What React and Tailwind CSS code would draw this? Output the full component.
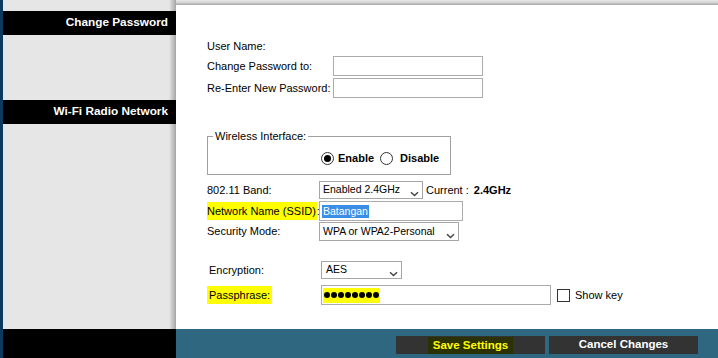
const font = { fontFamily: '"Liberation Sans", Arial, sans-serif' };

function Chevron() {
  return (
    <svg width="9" height="6" viewBox="0 0 9 6" className="shrink-0">
      <path d="M1 1.2 L4.5 4.6 L8 1.2" fill="none" stroke="#444" strokeWidth="1.4" />
    </svg>
  );
}

function Select({ value, className }) {
  return (
    <div className={`flex justify-between border border-[#a6a6a6] bg-white pl-[3px] pr-[3px] ${className}`}>
      <span className="whitespace-nowrap text-[10.5px] leading-[15px] text-black">{value}</span>
      <div className="flex items-end pb-[1px]">
        <Chevron />
      </div>
    </div>
  );
}

function Radio({ checked }) {
  return (
    <span className="flex h-[13px] w-[13px] items-center justify-center rounded-full border border-[#333] bg-white">
      {checked && <span className="h-[7px] w-[7px] rounded-full bg-black" />}
    </span>
  );
}

function SideBar({ children, className = "" }) {
  return (
    <div className={`flex h-[24px] items-center justify-end whitespace-nowrap bg-black pr-[8px] text-[11.8px] font-bold text-white ${className}`}>
      {children}
    </div>
  );
}

export default function App() {
  return (
    <div className="flex h-[358px] w-[718px] overflow-hidden bg-white text-[11px] text-black" style={font}>
      <div className="w-[3px] shrink-0 bg-[#0c3a5e]" />
      <div className="flex flex-1 flex-col">
        <div className="flex h-[329px]">
          {/* sidebar */}
          <div className="w-[173px] shrink-0 bg-[linear-gradient(to_right,#e6e6e6_166px,#d2d2d2_168px,#b8b8b8_171px,#a4a4a4_173px)] pt-[11px]">
            <SideBar>Change Password</SideBar>
            <SideBar className="mt-[65px]">Wi-Fi Radio Network</SideBar>
          </div>

          {/* main */}
          <div className="flex flex-1 flex-col">
            <div className="h-[5px] bg-[linear-gradient(to_bottom,#e8e8e8,#d4d4d4_50%,#a6a6a6)]" />
            <div className="flex-1 whitespace-nowrap bg-white pl-[31px] pt-[31px]">
              <div className="flex h-[20px] items-center">User Name:</div>
              <div className="flex h-[20px] items-center">
                <span className="w-[126px] shrink-0">Change Password to:</span>
                <div className="h-[20px] w-[150px] border border-[#ababab]" />
              </div>
              <div className="mt-[2px] flex h-[20px] items-center">
                <span className="w-[126px] shrink-0">Re-Enter New Password:</span>
                <div className="h-[20px] w-[150px] border border-[#ababab]" />
              </div>

              <div className="relative mt-[38px] h-[39px] w-[244px] border border-[#a0a0a0] pl-[113px] pt-[14px]">
                <span className="absolute -top-[8px] left-[5px] bg-white px-[2px] leading-[14px]">Wireless Interface:</span>
                <div className="flex h-[14px] items-center">
                  <Radio checked />
                  <span className="ml-[4px] font-bold">Enable</span>
                  <span className="ml-[6px]"><Radio /></span>
                  <span className="ml-[7px] font-bold">Disable</span>
                </div>
              </div>

              <div className="mt-[6px] flex h-[18px] items-center">
                <span className="w-[112px] shrink-0">802.11 Band:</span>
                <Select value="Enabled 2.4GHz" className="h-[18px] w-[104px]" />
                <span className="ml-[3px]">Current :</span>
                <span className="ml-[5px] font-bold">2.4GHz</span>
              </div>

              <div className="mt-[2px] flex h-[20px] items-center">
                <span className="w-[112px] shrink-0">
                  <span className="bg-[#ffff00] py-[3px] pr-[1px]">Network Name (SSID)</span>:
                </span>
                <div className="flex h-[20px] w-[144px] items-center border border-[#ababab] pl-[2px]">
                  <span className="bg-[#3b8ee6] px-[1px] text-[10.5px] leading-[13px] text-white">Batangan</span>
                </div>
              </div>

              <div className="mt-[1px] flex h-[19px] items-center">
                <span className="w-[112px] shrink-0">Security Mode:</span>
                <Select value="WPA or WPA2-Personal" className="h-[19px] w-[140px] pt-[1px]" />
              </div>

              <div className="ml-[2px] mt-[20px] flex h-[18px] items-center">
                <span className="w-[112px] shrink-0">Encryption:</span>
                <Select value="AES" className="h-[18px] w-[81px] pl-[4px]" />
              </div>

              <div className="mt-[6px] flex h-[20px] items-center">
                <span className="w-[114px] shrink-0">
                  <span className="bg-[#ffff00] px-[2px] py-[3px]">Passphrase:</span>
                </span>
                <div className="flex h-[20px] w-[230px] items-center border border-[#ababab] pl-[1px]">
                  <span className="flex h-[15px] items-center gap-[1px] bg-[#ffff00] px-[1px]">
                    {[0, 1, 2, 3, 4, 5, 6, 7].map((i) => (
                      <span key={i} className="h-[6px] w-[6px] rounded-full bg-black" />
                    ))}
                  </span>
                </div>
                <span className="ml-[6px] h-[13px] w-[13px] border border-[#333] bg-white" />
                <span className="ml-[5px]">Show key</span>
              </div>
            </div>
          </div>
        </div>

        {/* bottom bar */}
        <div className="flex h-[29px]">
          <div className="w-[173px] shrink-0 bg-black" />
          <div className="flex flex-1 gap-[4px] bg-[#2f6781] pl-[220px] pt-[7px]">
            <div className="flex h-[18px] w-[149px] items-center justify-center bg-[#333]">
              <span className="bg-[#2b3100] px-[5px] text-[11.5px] font-bold leading-[17px] text-[#ffff00]">Save Settings</span>
            </div>
            <div className="flex h-[18px] w-[149px] items-center justify-center bg-[#333] text-[11.5px] font-bold text-white">
              Cancel Changes
            </div>
          </div>
        </div>
      </div>
    </div>
  );
}
